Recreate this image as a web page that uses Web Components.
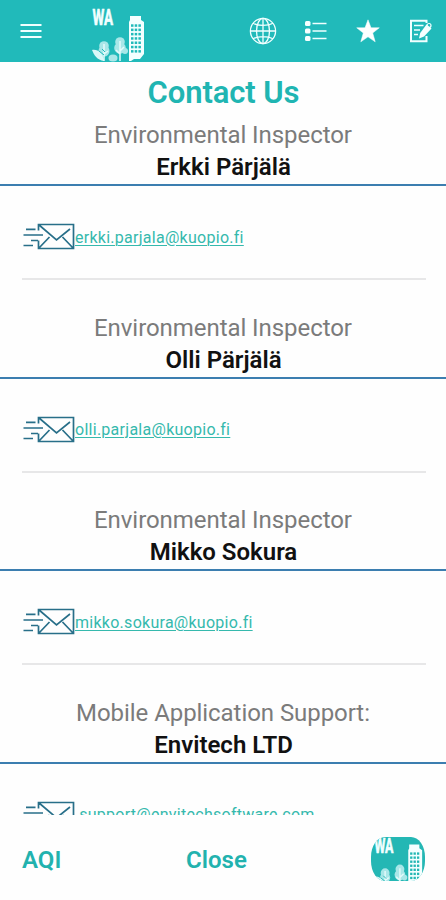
<!DOCTYPE html>
<html lang="en">
<head>
<meta charset="utf-8">
<title>Contact Us</title>
<style>
html,body{margin:0;height:100%;background:#fefefe;font-family:Roboto,"Liberation Sans",sans-serif}
</style>
</head>
<body>
<contact-app></contact-app>
<script>
class BaseElement extends HTMLElement {
  constructor() {
    super();
    this.attachShadow({ mode: 'open' }).innerHTML = this.render();
  }
}

class CityLogo extends BaseElement {
  render() {
    let windows = '';
    for (let r = 0; r < 7; r++) for (let c = 0; c < 3; c++)
      windows += `<rect x="${39 + c * 3.7}" y="${16.3 + r * 4.3}" width="2.5" height="2.5"/>`;
    return `<style>
      :host{display:block;color:#21baba}
      svg{display:block;width:100%;height:100%;overflow:visible}
      text{font:700 22px Roboto,"Liberation Sans",sans-serif}
    </style>
    <svg viewBox="0 0 54 54" preserveAspectRatio="none">
      <text x="0.5" y="16.5" textLength="20.5" lengthAdjust="spacingAndGlyphs" fill="#f2ffff" stroke="#f2ffff" stroke-width=".7">WA</text>
      <path fill="#f4ffff" d="M38 8h11v4l3 2v32l-4 5h-6l-3 2h-2V14l1-2z"/>
      <g fill="currentColor">${windows}</g>
      <g fill="#a9e7e8">
        <circle cx="12" cy="38" r="4.8"/><circle cx="12" cy="43" r="5.5"/>
        <circle cx="28" cy="34" r="4.8"/><circle cx="28" cy="40" r="5.8"/>
        <circle cx="33" cy="43" r="3"/><ellipse cx="21" cy="50" rx="4.5" ry="3.5"/>
      </g>
      <path fill="#d9f8f8" d="M0 42c6-1 11 3 12 11C5 52 2 47 0 42z"/>
      <path fill="none" stroke="#e4fbfb" stroke-width="1.5" d="M12 53V36M12 46l4-3M28 53V33M28 43l4-4M28 46l-4-4"/>
      <path fill="none" stroke="currentColor" d="M7 43l5 4M10 41l3 3"/>
    </svg>`;
  }
}

class TopBar extends BaseElement {
  render() {
    return `<style>
      :host{display:flex;align-items:center;height:62px;background:#21baba;box-sizing:border-box;padding-left:20px}
      svg{display:block;fill:none;stroke:#f0ffff;flex:none}
      .menu{margin-right:50px}
      city-logo{width:54px;height:54px;margin-right:103px;align-self:flex-end}
      .globe{margin-right:28px}.list{margin-right:29px}.star{margin-right:29px}
    </style>
    <svg class="menu" width="22" height="18" viewBox="0 0 22 18" stroke-width="2.2"><path d="M.5 3h21M.5 9h21M.5 15h21"/></svg>
    <city-logo></city-logo>
    <svg class="globe" width="28" height="28" viewBox="0 0 28 28" stroke-width="1.3"><circle cx="14" cy="14" r="12.6"/><ellipse cx="14" cy="14" rx="6.5" ry="12.6"/><path d="M14 1v26M1 14h26M4 6.2c5 3 15 3 20 0M4 21.8c5-3 15-3 20 0"/></svg>
    <svg class="list" width="22" height="22" viewBox="0 0 22 22"><g fill="#f6ffff" stroke="none"><rect x="0" y="1" width="5.5" height="5" rx="1.5"/><rect x="0" y="8.5" width="5.5" height="5" rx="1.5"/><rect x="0" y="16" width="5.5" height="5" rx="1.5"/></g><path stroke-width="1.6" d="M7.500 3.500h14M7.500 11h14M7.500 18.500h14"/></svg>
    <svg class="star" width="24" height="24" viewBox="0 0 24 24"><path fill="#fff" stroke="#fff" stroke-width=".5" stroke-linejoin="round" d="M12 .8l3 8h8.300l-6.600 5.200 2.500 8.800L12 17.800l-7.200 5 2.500-8.800L.7 8.800H9z"/></svg>
    <svg class="note" width="24" height="24" viewBox="0 0 24 24"><path stroke-width="2" d="M17.500 4V1.800H2V22.200h15.500V17"/><path stroke-width="1.600" d="M5 6.500h9.500M5 11h6M5 15.500h4"/><path fill="#f6ffff" stroke="none" d="M17.500 5.500l5 4-7.500 8-5 2 1.200-5.500z"/><circle cx="20" cy="6.500" r="2" stroke-width="1.200"/></svg>`;
  }
}

class MailIcon extends BaseElement {
  render() {
    return `<style>:host{display:block;width:52px;height:27px;flex:none}svg{display:block}</style>
    <svg width="52" height="27" viewBox="0 0 52 27" fill="none" stroke="#286f89" stroke-width="1.7">
      <path d="M15.500 7.500V1.500H50.500V25.500H15.500V17.500M15.500 1.500l18 15.300L47 6M15.500 25.500L26.500 14M50.500 25.500L39.500 14"/>
      <path d="M3 6.300h9.500M.5 12h19.500M8 17.500h7M.5 22.500h9.500"/>
    </svg>`;
  }
}

class ContactCard extends BaseElement {
  render() {
    return `<style>
      :host{display:block;height:192.5px}
      .head{height:67px;box-sizing:border-box;text-align:center;border-bottom:2px solid #3c7eb0}
      .role,.name{font-size:24px;line-height:32px;white-space:nowrap}
      .role{color:#7b7b7b;letter-spacing:-.06px}
      .name{color:#111;font-weight:600;padding-left:1px}
      .mail{display:flex;align-items:center;margin:0 20px 0 22px;height:94px;padding:9px 0 0 1px;box-sizing:border-box;border-bottom:2px solid #e7e7e8}
      .address{color:#35b9ad;font-size:16px;line-height:24px;text-decoration:underline;text-decoration-thickness:1px;text-underline-offset:2px;white-space:pre;padding-top:2px;letter-spacing:.27px}
    </style>
    <div class="head"><div class="role"><slot name="role"></slot></div><div class="name"><slot name="name"></slot></div></div>
    <div class="mail"><mail-icon></mail-icon><span class="address"><slot name="mail"></slot></span></div>`;
  }
}

class BottomBar extends BaseElement {
  render() {
    return `<style>
      :host{display:grid;grid-template-columns:1fr auto 1fr;align-items:center;height:85px;padding:0 21px 0 22px;box-sizing:border-box;background:#fefefe;color:#22b2ae;font-size:24px;font-weight:600}
      span{padding-top:4px}
      .close{padding-right:14px}
      .badge{justify-self:end;width:54px;height:44px;background:#24b7b4;border-radius:14px / 20px;overflow:hidden;margin-top:3px}
      city-logo{height:51px;width:50px;margin:0 0 0 3px;color:#24b7b4}
      .aqi{justify-self:start}
    </style>
    <span class="aqi">AQI</span><span class="close">Close</span><div class="badge"><city-logo></city-logo></div>`;
  }
}

class ContactApp extends BaseElement {
  render() {
    return `<style>
      :host{display:flex;flex-direction:column;height:900px;width:446px;overflow:hidden}
      top-bar,bottom-bar{flex:none}
      main{flex:1;min-height:0;overflow:hidden}
      h1{margin:0;height:57px;line-height:61px;text-align:center;font-size:31px;font-weight:600;color:#20b5b2;letter-spacing:-.1px;padding-left:1px}
    </style>
    <top-bar></top-bar>
    <main>
      <h1>Contact Us</h1>
      <contact-card><span slot="role">Environmental Inspector</span><span slot="name">Erkki Pärjälä</span><span slot="mail">erkki.parjala@kuopio.fi</span></contact-card>
      <contact-card><span slot="role">Environmental Inspector</span><span slot="name">Olli Pärjälä</span><span slot="mail">olli.parjala@kuopio.fi</span></contact-card>
      <contact-card><span slot="role">Environmental Inspector</span><span slot="name">Mikko Sokura</span><span slot="mail">mikko.sokura@kuopio.fi</span></contact-card>
      <contact-card><span slot="role">Mobile Application Support:</span><span slot="name">Envitech LTD</span><span slot="mail"> support@envitechsoftware.com</span></contact-card>
    </main>
    <bottom-bar></bottom-bar>`;
  }
}

customElements.define('city-logo', CityLogo);
customElements.define('top-bar', TopBar);
customElements.define('mail-icon', MailIcon);
customElements.define('contact-card', ContactCard);
customElements.define('bottom-bar', BottomBar);
customElements.define('contact-app', ContactApp);
</script>
</body>
</html>
